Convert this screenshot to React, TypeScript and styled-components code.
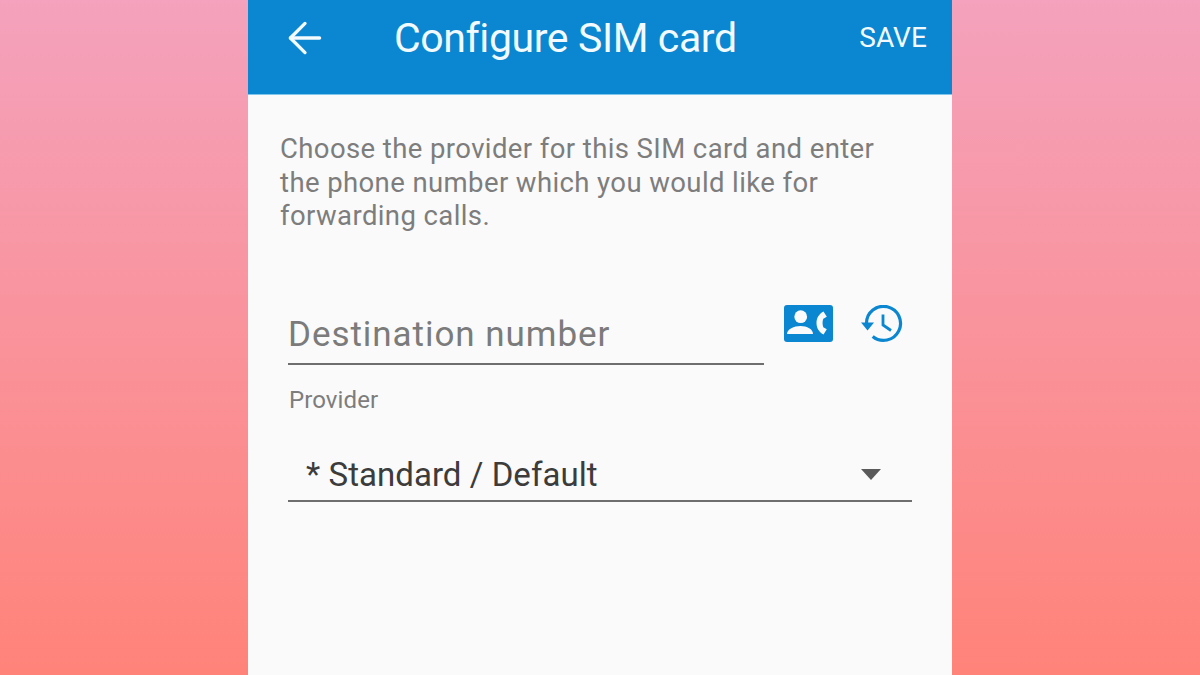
import styled, { createGlobalStyle } from "styled-components";
import { ArrowLeft } from "lucide-react";

const GlobalStyle = createGlobalStyle`
  html, body {
    margin: 0;
    padding: 0;
    height: 100%;
    overflow: hidden;
    font-family: Roboto, sans-serif;
  }
`;

function App() {
  return (
    <Page>
      <GlobalStyle />
      <Phone>
        <Header>
          <BackButton>
            <ArrowLeft size={50} strokeWidth={1.6} />
          </BackButton>
          <Title>Configure SIM card</Title>
          <SaveButton>SAVE</SaveButton>
        </Header>
        <Content>
          <Intro>
            Choose the provider for this SIM card and enter
            <br />
            the phone number which you would like for
            <br />
            forwarding calls.
          </Intro>
          <NumberRow>
            <NumberField>Destination number</NumberField>
            <ContactIcon />
            <HistoryIcon />
          </NumberRow>
          <ProviderLabel>Provider</ProviderLabel>
          <Select>
            <SelectValue>* Standard / Default</SelectValue>
            <Caret />
          </Select>
        </Content>
      </Phone>
    </Page>
  );
}

function ContactIcon() {
  return (
    <IconSvg width="49" height="37" viewBox="0 0 49 37">
      <rect width="49" height="37" rx="3" fill="#0a87d0" />
      <circle cx="16.700" cy="11.700" r="6.400" fill="#fafafa" />
      <path d="M3 29c0-5 7-8 13.500-8S29 24 29 29z" fill="#fafafa" />
      <path
        d="M39.500 6.500c-5 2.800-7 7-7 11.500s2 8.700 7 11.500l3.300-5.300-3.500-2c-1-2.700-1-5.700 0-8.400l3.500-2z"
        fill="#fafafa"
      />
    </IconSvg>
  );
}

function HistoryIcon() {
  return (
    <HistorySvg width="42" height="38" viewBox="0 0 42 38">
      <path
        d="M5.500 18.500a17 17 0 1 1 6.200 13"
        fill="none"
        stroke="#0a87d0"
        strokeWidth="3.200"
      />
      <path d="M0 17.500h13l-6.500 8z" fill="#0a87d0" />
      <path
        d="M22 9.500V20l8 5.500"
        fill="none"
        stroke="#0a87d0"
        strokeWidth="2.800"
      />
    </HistorySvg>
  );
}

function Caret() {
  return (
    <svg width="20" height="11" viewBox="0 0 20 11">
      <path d="M0 0h20L10 11z" fill="#5a5a5a" />
    </svg>
  );
}

const Page = styled.div`
  display: flex;
  justify-content: center;
  width: 1200px;
  height: 675px;
  overflow: hidden;
  background: linear-gradient(180deg, #f4a2bd 0%, #ff8379 100%);
`;

const Phone = styled.div`
  display: flex;
  flex-direction: column;
  width: 704px;
  height: 675px;
  background: #fafafa;
`;

const Header = styled.div`
  display: flex;
  align-items: center;
  box-sizing: border-box;
  height: 95px;
  padding: 0 25px 19px 32px;
  background: #0a87d0;
  border-bottom: 1px solid #7fc6ea;
  color: #f2fafd;
`;

const BackButton = styled.div`
  display: flex;
  margin-right: 64px;
`;

const Title = styled.div`
  flex: 1;
  font-size: 41px;
  letter-spacing: -0.4px;
`;

const SaveButton = styled.div`
  font-size: 28px;
  letter-spacing: 0.1px;
`;

const Content = styled.div`
  display: flex;
  flex-direction: column;
  padding: 37px 40px 0 32px;
`;

const Intro = styled.p`
  margin: 0;
  font-size: 27.500px;
  line-height: 33.500px;
  letter-spacing: 0.4px;
  color: #7d7d7d;
  white-space: nowrap;
`;

const NumberRow = styled.div`
  display: flex;
  align-items: flex-start;
  margin-top: 72px;
  padding-left: 8px;
`;

const NumberField = styled.div`
  box-sizing: border-box;
  width: 476px;
  height: 60px;
  padding-top: 9px;
  border-bottom: 2px solid #6e6e6e;
  font-size: 35px;
  letter-spacing: 0.95px;
  color: #7b7b7b;
  white-space: nowrap;
`;

const IconSvg = styled.svg`
  margin-left: 20px;
  flex: none;
`;

const HistorySvg = styled.svg`
  margin-left: 28px;
  flex: none;
`;

const ProviderLabel = styled.div`
  margin-top: 21px;
  padding-left: 9px;
  font-size: 24px;
  letter-spacing: 0.1px;
  color: #7d7d7d;
`;

const Select = styled.div`
  display: flex;
  align-items: center;
  justify-content: space-between;
  box-sizing: border-box;
  width: 624px;
  height: 70px;
  margin: 18px 0 0 8px;
  padding: 18px 31px 0 18px;
  border-bottom: 2px solid #6e6e6e;
`;

const SelectValue = styled.div`
  font-size: 33px;
  letter-spacing: 0.05px;
  color: #3c3c3c;
`;

export default App;
